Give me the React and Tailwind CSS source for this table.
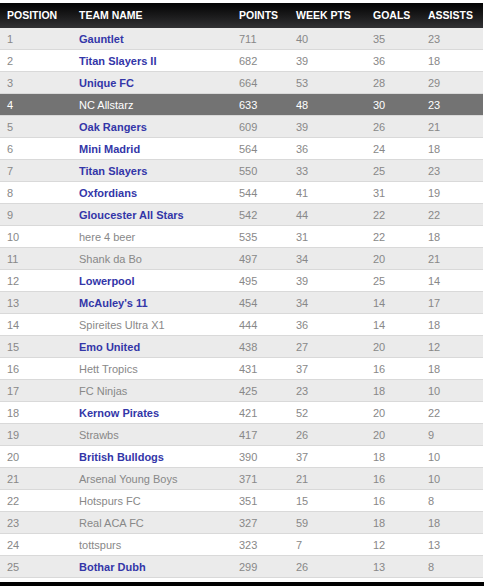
const rows = [
  [1, 'Gauntlet', 711, 40, 35, 23, true],
  [2, 'Titan Slayers II', 682, 39, 36, 18, true],
  [3, 'Unique FC', 664, 53, 28, 29, true],
  [4, 'NC Allstarz', 633, 48, 30, 23, false],
  [5, 'Oak Rangers', 609, 39, 26, 21, true],
  [6, 'Mini Madrid', 564, 36, 24, 18, true],
  [7, 'Titan Slayers', 550, 33, 25, 23, true],
  [8, 'Oxfordians', 544, 41, 31, 19, true],
  [9, 'Gloucester All Stars', 542, 44, 22, 22, true],
  [10, 'here 4 beer', 535, 31, 22, 18, false],
  [11, 'Shank da Bo', 497, 34, 20, 21, false],
  [12, 'Lowerpool', 495, 39, 25, 14, true],
  [13, "McAuley's 11", 454, 34, 14, 17, true],
  [14, 'Spireites Ultra X1', 444, 36, 14, 18, false],
  [15, 'Emo United', 438, 27, 20, 12, true],
  [16, 'Hett Tropics', 431, 37, 16, 18, false],
  [17, 'FC Ninjas', 425, 23, 18, 10, false],
  [18, 'Kernow Pirates', 421, 52, 20, 22, true],
  [19, 'Strawbs', 417, 26, 20, 9, false],
  [20, 'British Bulldogs', 390, 37, 18, 10, true],
  [21, 'Arsenal Young Boys', 371, 21, 16, 10, false],
  [22, 'Hotspurs FC', 351, 15, 16, 8, false],
  [23, 'Real ACA FC', 327, 59, 18, 18, false],
  [24, 'tottspurs', 323, 7, 12, 13, false],
  [25, 'Bothar Dubh', 299, 26, 13, 8, true],
]

const MINE = 4
const cols = 'grid grid-cols-[72px_160px_57px_77px_55px_1fr] pl-[7px]'

function TeamRow({ row }) {
  const [pos, name, pts, week, goals, assists, linked] = row
  const mine = pos === MINE
  const bg = mine ? 'bg-[#737373] text-white' : pos % 2 ? 'bg-[#ebebeb] text-[#888]' : 'bg-white text-[#888]'

  return (
    <div className={`${cols} ${bg} h-[22px] pt-[1px] items-center border-b border-[#d9d9d9]`}>
      <div>{pos}</div>
      <div className={linked && !mine ? 'font-bold text-[#3336a8]' : ''}>{name}</div>
      <div>{pts}</div>
      <div>{week}</div>
      <div>{goals}</div>
      <div>{assists}</div>
    </div>
  )
}

export default function App() {
  return (
    <div className="w-[484px] h-[586px] bg-white pt-[3px] overflow-hidden font-['Liberation_Sans',Arial,sans-serif] text-[11px]">
      <div className="w-[483px]">
        {/* Header */}
        <div className={`${cols} h-[25px] items-center bg-gradient-to-b from-[#050505] to-[#323234] text-white font-bold text-[10.5px]`}>
          <div>POSITION</div>
          <div>TEAM NAME</div>
          <div>POINTS</div>
          <div>WEEK PTS</div>
          <div>GOALS</div>
          <div>ASSISTS</div>
        </div>
        {rows.map((r) => (
          <TeamRow key={r[0]} row={r} />
        ))}
      </div>
      <div className="mt-[4px] h-[6px] bg-black" />
    </div>
  )
}
